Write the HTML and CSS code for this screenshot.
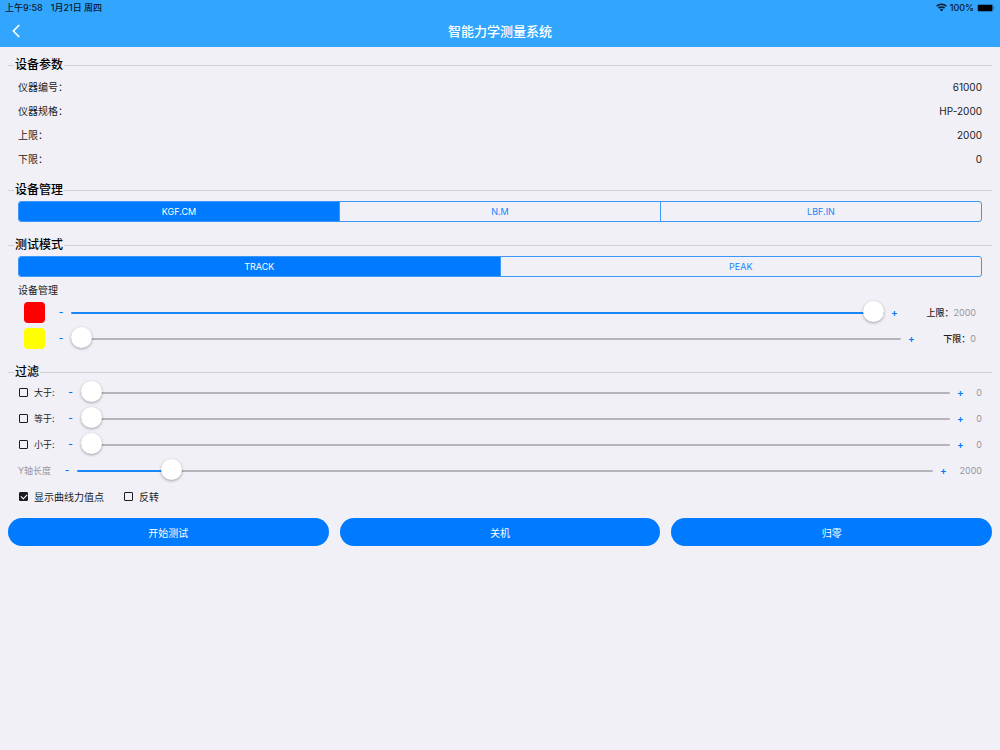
FILE: index.html
```
<!DOCTYPE html>
<html lang="zh-CN">
<head>
    <meta charset="UTF-8">
    <meta name="viewport" content="width=device-width, initial-scale=1.0">
    <title>智能力学测量系统</title>
    <link rel="stylesheet" href="styles.css">
</head>
<body>
    <header class="header">
        <div class="status">
            <span>上午9:58</span>
            <span class="date">1月21日 周四</span>
            <svg class="wifi" viewBox="0 0 20 16" aria-hidden="true">
                <path d="M1.2 5.8a12.4 12.4 0 0 1 17.6 0M4.6 9.2a7.6 7.6 0 0 1 10.8 0" fill="none" stroke="#0a1a28" stroke-width="2.8"/>
                <path d="M6.8 11.8a4.5 4.5 0 0 1 6.4 0L10 15.2z" fill="#0a1a28"/>
            </svg>
            <span>100%</span>
            <svg class="battery" viewBox="0 0 36 16" aria-hidden="true">
                <rect x="0.8" y="0.8" width="31" height="14.4" rx="4" fill="none" stroke="#1b5c91" stroke-width="1.4"/>
                <rect x="2" y="2" width="28.6" height="12" rx="2.5" fill="#000"/>
                <path d="M33.4 5.2v5.6c2-.8 2-4.8 0-5.6z" fill="#1b5c91"/>
            </svg>
        </div>
        <div class="nav">
            <button class="back" type="button" aria-label="返回">
                <svg viewBox="0 0 8 14" aria-hidden="true">
                    <path d="M7.2 1L1.4 7L7.2 13" fill="none" stroke="#fff" stroke-width="1.7"/>
                </svg>
            </button>
            <h1 class="title">智能力学测量系统</h1>
        </div>
    </header>

    <main class="main">
        <fieldset class="group">
            <legend>设备参数</legend>
            <dl class="info">
                <div class="item"><dt>仪器编号：</dt><dd>61000</dd></div>
                <div class="item"><dt>仪器规格：</dt><dd>HP-2000</dd></div>
                <div class="item"><dt>上限：</dt><dd>2000</dd></div>
                <div class="item"><dt>下限：</dt><dd>0</dd></div>
            </dl>
        </fieldset>

        <fieldset class="group unit">
            <legend>设备管理</legend>
            <div class="segment">
                <button class="on" type="button">KGF.CM</button>
                <button type="button">N.M</button>
                <button type="button">LBF.IN</button>
            </div>
        </fieldset>

        <fieldset class="group mode">
            <legend>测试模式</legend>
            <div class="segment">
                <button class="on" type="button">TRACK</button>
                <button type="button">PEAK</button>
            </div>
            <p class="subtitle">设备管理</p>
            <div class="row limit">
                <span class="color red"></span>
                <button class="step" type="button" aria-label="减少上限">-</button>
                <input class="slider" id="upper" type="range" min="0" max="2000" value="2000" style="--fill: 100%">
                <button class="step" type="button" aria-label="增加上限">+</button>
                <label for="upper">上限：</label><output class="value" for="upper">2000</output>
            </div>
            <div class="row limit">
                <span class="color yellow"></span>
                <button class="step" type="button" aria-label="减少下限">-</button>
                <input class="slider" id="lower" type="range" min="0" max="2000" value="0" style="--fill: 0%">
                <button class="step" type="button" aria-label="增加下限">+</button>
                <label for="lower">下限：</label><output class="value" for="lower">0</output>
            </div>
        </fieldset>

        <fieldset class="group filter">
            <legend>过滤</legend>
            <div class="row">
                <label class="check"><input type="checkbox">大于:</label>
                <button class="step" type="button" aria-label="减少">-</button>
                <input class="slider" type="range" min="0" max="2000" value="0" aria-label="大于" style="--fill: 0%">
                <button class="step" type="button" aria-label="增加">+</button>
                <output class="value">0</output>
            </div>
            <div class="row">
                <label class="check"><input type="checkbox">等于:</label>
                <button class="step" type="button" aria-label="减少">-</button>
                <input class="slider" type="range" min="0" max="2000" value="0" aria-label="等于" style="--fill: 0%">
                <button class="step" type="button" aria-label="增加">+</button>
                <output class="value">0</output>
            </div>
            <div class="row">
                <label class="check"><input type="checkbox">小于:</label>
                <button class="step" type="button" aria-label="减少">-</button>
                <input class="slider" type="range" min="0" max="2000" value="0" aria-label="小于" style="--fill: 0%">
                <button class="step" type="button" aria-label="增加">+</button>
                <output class="value">0</output>
            </div>
            <div class="row">
                <label class="axis" for="axis">Y轴长度</label>
                <button class="step" type="button" aria-label="减少">-</button>
                <input class="slider" id="axis" type="range" min="0" max="20000" value="2000" style="--fill: 10%">
                <button class="step" type="button" aria-label="增加">+</button>
                <output class="value" for="axis">2000</output>
            </div>
            <div class="row options">
                <label class="check"><input type="checkbox" checked>显示曲线力值点</label>
                <label class="check"><input type="checkbox">反转</label>
            </div>
        </fieldset>

        <div class="actions">
            <button type="button">开始测试</button>
            <button type="button">关机</button>
            <button type="button">归零</button>
        </div>
    </main>

    <script>
        var rows = document.querySelectorAll(".row");

        rows.forEach(function(row) {
            var slider = row.querySelector(".slider");
            if (!slider) return;
            var steps = row.querySelectorAll(".step");
            var value = row.querySelector(".value");

            // 更新数值和已填充的长度
            function update() {
                value.textContent = slider.value;
                slider.style.setProperty("--fill", slider.value / slider.max * 100 + "%");
            }

            slider.oninput = update;
            steps[0].onclick = function() {
                slider.stepDown();
                update();
            }
            steps[1].onclick = function() {
                slider.stepUp();
                update();
            }
        });

        // 切换分段按钮
        document.querySelectorAll(".segment button").forEach(function(btn) {
            btn.onclick = function() {
                btn.parentNode.querySelector(".on").className = "";
                btn.className = "on";
            }
        });
    </script>
</body>
</html>
```
FILE: styles.css
```
* {
    box-sizing: border-box;
}
body {
    margin: 0;
    min-height: 100vh;
    background-color: #f2f0f7;
    color: #1c1b20;
    font-family: Inter, "Noto Sans CJK SC", sans-serif;
    font-size: 10px;
}
button,
input {
    margin: 0;
    padding: 0;
    font-family: inherit;
}
button {
    border: 0;
    background: none;
    cursor: pointer;
}

/* 顶部 */
.header {
    background-color: #32a6ff;
}
.status {
    display: flex;
    align-items: center;
    height: 15px;
    padding: 0 5px;
    color: #0a1a28;
    font-size: 9px;
    font-weight: 500;
    line-height: 15px;
}
.date {
    margin-left: 8px;
}
.wifi {
    width: 11px;
    height: 9px;
    margin-left: auto;
    margin-right: 3px;
}
.battery {
    width: 18px;
    height: 8px;
    margin-left: 3px;
}
.nav {
    display: grid;
    grid-template-columns: 32px 1fr 32px;
    align-items: center;
    height: 32px;
}
.back {
    height: 32px;
}
.back svg {
    display: block;
    width: 8px;
    height: 14px;
    margin: 0 auto;
}
.title {
    margin: 0;
    color: #fff;
    font-size: 13px;
    font-weight: 500;
    line-height: 32px;
    text-align: center;
}

/* 分组 */
.main {
    padding: 11px 8px;
}
.group {
    min-width: 0;
    margin: 0;
    padding: 0 10px;
    border: 0;
    border-top: 1px solid #d3d1d8;
}
.group legend {
    margin-left: -4px;
    padding: 0 1px;
    color: #000;
    font-size: 12px;
    font-weight: 500;
    line-height: 14px;
}
.unit {
    margin-top: 12px;
}
.mode {
    margin-top: 16px;
}
.filter {
    margin-top: 14px;
}

.info {
    margin: 0;
    padding-top: 3px;
}
.item {
    display: flex;
    justify-content: space-between;
    line-height: 24px;
}
.item dd {
    margin: 0;
}

.segment {
    display: flex;
    margin-top: 4px;
    border: 1px solid #3d97f8;
    border-radius: 3px;
    overflow: hidden;
}
.segment button {
    flex: 1;
    height: 19px;
    color: #1a86fb;
    font-size: 9px;
}
.segment button + button {
    border-left: 1px solid #3d97f8;
}
.segment .on {
    background-color: #007aff;
    color: #fff;
}
.subtitle {
    margin: 4px 0 0;
    line-height: 18px;
}

/* 滑块行 */
.row {
    display: flex;
    align-items: center;
    height: 26px;
    font-size: 9px;
}
.limit {
    padding: 0 6px;
}
.limit label {
    margin-left: 16px;
    font-weight: 500;
}
.limit .value {
    margin-left: 0;
}
.color {
    width: 21px;
    height: 21px;
    border-radius: 4px;
}
.red {
    background-color: #ff0000;
}
.yellow {
    background-color: #ffff00;
}
.step {
    width: 20px;
    height: 20px;
    color: #007aff;
    font-size: 10px;
    font-weight: 600;
    line-height: 20px;
}
.step:first-of-type {
    margin-left: 6px;
}
.value {
    margin-left: 6px;
    color: #98969e;
}
.limit .step:last-of-type {
    margin-right: 6px;
}
.axis {
    color: #98969e;
}

.slider {
    flex: 1;
    min-width: 0;
    height: 24px;
    padding-top: 2px;
    background: none;
    appearance: none;
    -webkit-appearance: none;
}
.slider::-webkit-slider-runnable-track {
    height: 2px;
    border-radius: 1px;
    background: linear-gradient(to right, #1a86fb var(--fill), #b6b4bb var(--fill));
}
.slider::-webkit-slider-thumb {
    -webkit-appearance: none;
    width: 21px;
    height: 21px;
    margin-top: -11px;
    border-radius: 50%;
    background-color: #fff;
    box-shadow: 0 1px 3px rgba(0, 0, 0, 0.35);
}

/* 复选框 */
.check {
    display: flex;
    align-items: center;
}
.check input {
    position: relative;
    width: 9px;
    height: 9px;
    margin: 0 6px 0 1px;
    border: 1px solid #1c1b20;
    border-radius: 1px;
    appearance: none;
    -webkit-appearance: none;
}
.check input:checked {
    background-color: #1c1b20;
}
.check input:checked::after {
    content: "";
    position: absolute;
    left: 1px;
    top: 1px;
    width: 5px;
    height: 3px;
    border-left: 1px solid #fff;
    border-bottom: 1px solid #fff;
    transform: rotate(-45deg);
}
.options {
    gap: 19px;
    font-size: 10px;
}

.actions {
    display: grid;
    grid-template-columns: repeat(3, 1fr);
    gap: 11px;
    margin-top: 9px;
}
.actions button {
    height: 28px;
    border-radius: 14px;
    background-color: #007aff;
    color: #fff;
    font-size: 10px;
}
```
